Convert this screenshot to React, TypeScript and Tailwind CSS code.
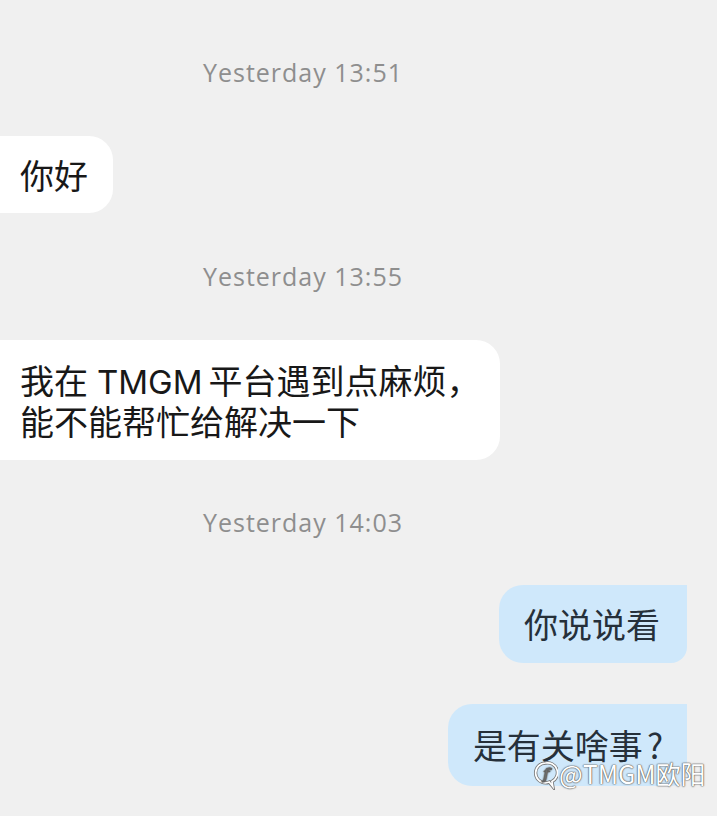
import React from "react";

function Stamp({ text, mt }: { text: string; mt: string }) {
  return (
    <div
      className={`${mt} h-[30px] leading-[30px] text-center text-[25px] text-[#8e8e8e] pr-[111px] font-['Open_Sans',Inter,sans-serif] tracking-[1px]`}
    >
      {text}
    </div>
  );
}

const cjkCls = "font-['Noto_Sans_CJK_SC','Noto_Sans',sans-serif] text-[34px] leading-[41px]";

export default function App() {
  return (
    <div className="relative w-full h-[816px] bg-[#f0f0f0] overflow-hidden flex flex-col">
      <Stamp text="Yesterday 13:51" mt="mt-[57px]" />
      <div className="mt-[49px] self-start">
        <div className={`bg-white rounded-r-[24px] pl-[20px] pr-[25px] py-[18px] text-[#181818] ${cjkCls}`}>
          你好
        </div>
      </div>
      <Stamp text="Yesterday 13:55" mt="mt-[48px]" />
      <div className="mt-[49px] self-start">
        <div className={`bg-white rounded-r-[24px] pl-[20px] w-[500px] py-[19px] text-[#181818] ${cjkCls}`}>
          我在<span className="ml-[9px] mr-[6px] font-['Inter',sans-serif] text-[33px] leading-none">TMGM</span>平台遇到点麻烦，
          <br />
          能不能帮忙给解决一下
        </div>
      </div>
      <Stamp text="Yesterday 14:03" mt="mt-[47px]" />
      <div className="mt-[48px] self-end mr-[30px]">
        <div className={`bg-[#cfe8fb] rounded-l-[24px] rounded-br-[16px] pl-[25px] pr-[27px] pt-[18px] pb-[19px] text-[#26303a] ${cjkCls}`}>
          你说说看
        </div>
      </div>
      <div className="mt-[41px] self-end mr-[30px]">
        <div className={`bg-[#cfe8fb] rounded-l-[24px] rounded-br-[16px] pl-[25px] pr-[24px] pt-[20px] pb-[21px] text-[#26303a] ${cjkCls}`}>
          是有关啥事<span className="ml-[4px]">?</span>
        </div>
      </div>
      <div className="absolute left-[533px] top-[757px] flex items-center gap-[1px] text-[25px] leading-none text-white tracking-[0px] [text-shadow:0_0_1px_#555,0_0_1px_#555,0_0_2px_#777] font-['Noto_Sans_CJK_SC',sans-serif]">
        <svg width="25" height="30" viewBox="0 0 24 28" className="mt-[3px]">
          <path
            d="M12 2.5a9.5 9.5 0 1 0 0 19c1.6 0 2.6-.3 3.6-.7L19 25l-.8-4.7A9.5 9.5 0 0 0 12 2.5Z"
            fill="none"
            stroke="#777"
            strokeWidth="3.2"
          />
          <path
            d="M12 2.5a9.5 9.5 0 1 0 0 19c1.6 0 2.6-.3 3.6-.7L19 25l-.8-4.7A9.5 9.5 0 0 0 12 2.5Z"
            fill="none"
            stroke="#fff"
            strokeWidth="1.6"
          />
          <text
            x="12.5"
            y="18"
            textAnchor="middle"
            fontSize="15"
            fontStyle="italic"
            fill="#fff"
            stroke="#666"
            strokeWidth="0.6"
            fontFamily="DejaVu Serif, serif"
          >
            f
          </text>
        </svg>
        <span>@TMGM欧阳</span>
      </div>
    </div>
  );
}
